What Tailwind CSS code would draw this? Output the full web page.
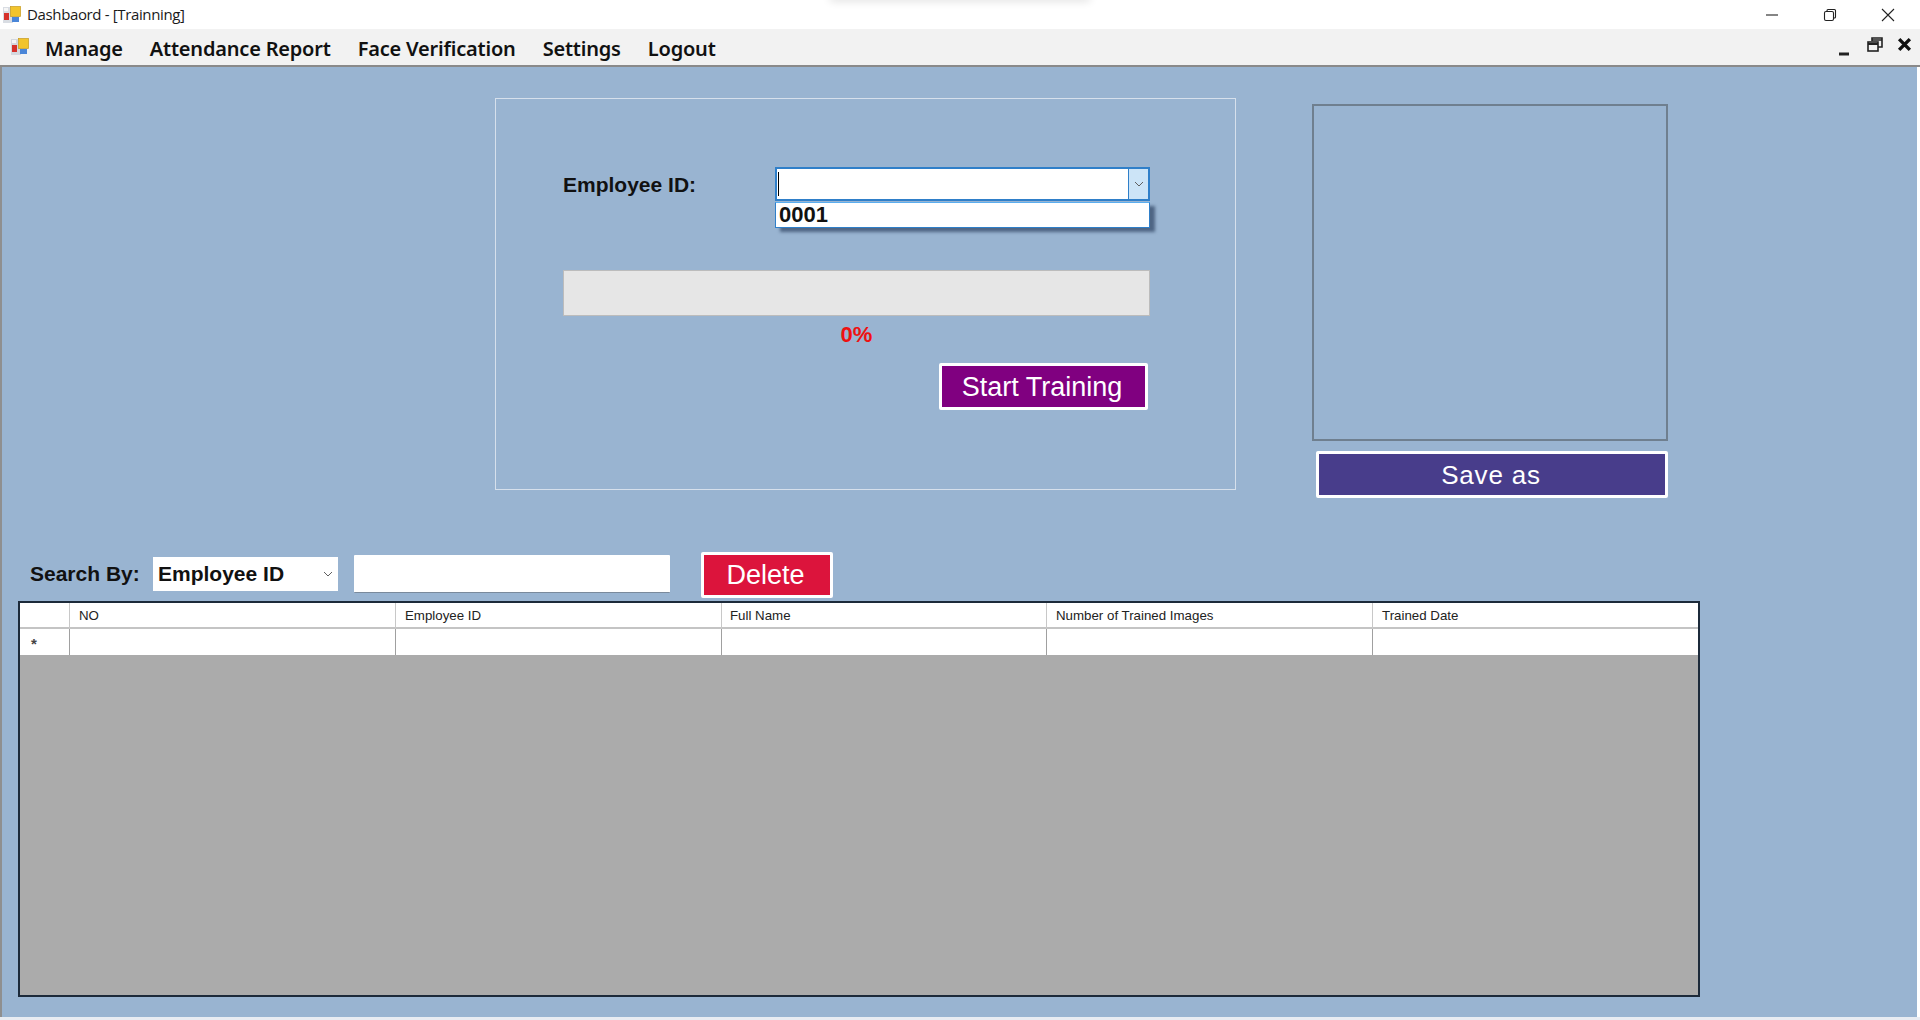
<!DOCTYPE html>
<html>
<head>
<meta charset="utf-8">
<script src="https://cdn.jsdelivr.net/npm/@tailwindcss/browser@4"></script>
<title>Dashbaord - [Trainning]</title>
</head>
<body class="w-[1920px] h-[1020px] overflow-hidden bg-white font-['Liberation_Sans',sans-serif]">
<!-- title bar -->
<div class="h-[29px] bg-white flex items-center relative">
  <div class="absolute left-[830px] -top-[6px] w-[260px] h-[6px] shadow-[0_1px_8px_rgba(0,0,0,0.14)]"></div>
  <svg class="ml-[3px] w-[18px] h-[17px]" viewBox="0 0 18 17"><rect x="0" y="1" width="10" height="16" fill="#d9dde3"/><rect x="1" y="2" width="4" height="3" fill="#f6f6f6"/><rect x="1" y="7" width="5" height="7" fill="#d6322c"/><rect x="7.5" y="0.5" width="10" height="10" fill="#f2c42c" stroke="#c79a1e" stroke-width=".7"/><rect x="9" y="11" width="7" height="5" fill="#4a86d8"/></svg>
  <span class="ml-[6px] text-[15px] text-[#1a1a1a] font-['Open_Sans',sans-serif] tracking-[-0.36px]">Dashbaord - [Trainning]</span>
  <div class="ml-auto flex items-center">
    <svg class="w-[14px] h-[14px] mr-[44px]" viewBox="0 0 14 14"><path d="M1 7h12" stroke="#222" stroke-width="1.1"/></svg>
    <svg class="w-[14px] h-[14px] mr-[44px]" viewBox="0 0 14 14" fill="none" stroke="#222" stroke-width="1.1"><rect x="1.5" y="3.5" width="9" height="9" rx="1.5"/><path d="M4 3.5V2.5a1 1 0 0 1 1-1h6.5a1 1 0 0 1 1 1V9a1 1 0 0 1-1 1h-1"/></svg>
    <svg class="w-[14px] h-[14px] mr-[25px]" viewBox="0 0 14 14"><path d="M1 1l12 12M13 1L1 13" stroke="#222" stroke-width="1.1"/></svg>
  </div>
</div>
<!-- menu bar -->
<div class="h-[36px] bg-[#f2f2f2] flex items-center border-b-[2px] border-[#8a8a8a] box-content">
  <svg class="ml-[11px] w-[18px] h-[17px] -mt-[2px]" viewBox="0 0 18 17"><rect x="0" y="1" width="10" height="16" fill="#d4d8de"/><rect x="1" y="2" width="4" height="3" fill="#f6f6f6"/><rect x="1" y="7" width="5" height="7" fill="#d6322c"/><rect x="7.5" y="0.5" width="10" height="10" fill="#f2c42c" stroke="#c79a1e" stroke-width=".7"/><rect x="9" y="11" width="7" height="5" fill="#4a86d8"/></svg>
  <nav class="ml-[16px] mt-[3px] flex gap-[27px] text-[20px] font-semibold text-[#111] font-['Noto_Sans',sans-serif] tracking-[-0.2px]">
    <span>Manage</span><span>Attendance Report</span><span>Face Verification</span><span>Settings</span><span>Logout</span>
  </nav>
  <div class="ml-auto flex items-center">
    <svg class="w-[12px] h-[14px] mr-[17px] mt-[3px]" viewBox="0 0 12 14"><path d="M1 12h10" stroke="#222" stroke-width="3"/></svg>
    <svg class="w-[16px] h-[15px] mr-[14px] -mt-[5px]" viewBox="0 0 16 15" fill="none" stroke="#222" stroke-width="1.6"><rect x="1" y="5" width="10" height="9"/><path d="M1 7h10" stroke-width="2"/><path d="M5 4V1h10v9h-4M5 3h10" /></svg>
    <svg class="w-[15px] h-[15px] mr-[8px] -mt-[5px]" viewBox="0 0 14 14"><path d="M2 2l10 10M12 2L2 12" stroke="#111" stroke-width="3.2"/></svg>
  </div>
</div>
<!-- MDI client -->
<main class="h-[950px] mr-[3px] bg-[#99b4d1] border-l-2 border-[#8f8f8f]">
  <div class="flex items-start pt-[31px] pl-[493px]">
    <section class="w-[741px] h-[392px] border border-[#d6e0ec] pt-[68px] pl-[67px] pr-[85px] flex flex-col">
      <div class="flex items-start h-[34px]">
        <label class="w-[212px] text-[21px] font-bold text-[#111] leading-[34px] pt-[1px]">Employee ID:</label>
        <div class="relative w-[375px] h-[34px] bg-white border-2 border-[#2f7fc9] flex">
          <span class="ml-[1px] mt-[3px] w-px h-[24px] bg-black"></span>
          <span class="ml-auto w-[20px] h-full bg-[#cce4f7] border-l border-[#2f7fc9] flex items-center justify-center">
            <svg class="w-[10px] h-[6px]" viewBox="0 0 10 6" fill="none" stroke="#606060"><path d="M1 1l4 4 4-4"/></svg>
          </span>
          <div class="absolute -left-[2px] top-[33px] w-[375px] h-[26px] bg-white border border-[#2f7fc9] border-t-[#5aaef0] shadow-[5px_4px_3px_rgba(40,60,90,0.65)] text-[22px] font-bold text-[#111] leading-[24px] pl-[3px]">0001</div>
        </div>
      </div>
      <div class="mt-[69px] w-[587px] h-[46px] bg-[#e6e6e6] border border-[#bcbcbc]"></div>
      <div class="mt-[4px] text-center text-[22px] font-bold text-[#ee1111] leading-[29px]">0%</div>
      <button class="self-end mt-[14px] mr-[2px] w-[209px] h-[47px] bg-[#800080] border-[3px] border-white rounded-[2px] text-white text-[27px] leading-none pt-[2px] pr-[3px]">Start Training</button>
    </section>
    <aside class="ml-[76px] mt-[6px] w-[356px]">
      <div class="h-[337px] border-2 border-[#6f7f8f]"></div>
      <button class="mt-[10px] ml-[4px] w-[352px] h-[47px] bg-[#483d8b] border-[3px] border-white rounded-[2px] text-white text-[26px] leading-none tracking-[0.8px] pr-[2px]">Save as</button>
    </aside>
  </div>
  <div class="mt-[54px] pl-[28px] h-[46px] flex items-center">
    <span class="w-[123px] mb-[2px] text-[21px] font-bold text-[#111]">Search By:</span>
    <div class="w-[185px] h-[34px] mb-[2px] bg-white flex items-center pl-[5px] text-[21px] font-bold text-[#111]">
      Employee ID
      <svg class="ml-auto mr-[5px] w-[10px] h-[6px]" viewBox="0 0 10 6" fill="none" stroke="#606060"><path d="M1 1l4 4 4-4"/></svg>
    </div>
    <div class="ml-[16px] w-[316px] h-[38px] mb-[2px] bg-white border-b border-[#7a8a9c] rounded-[1px]"></div>
    <button class="ml-[31px] w-[132px] h-[46px] bg-[#dc143c] border-[3px] border-white rounded-[2px] text-white text-[27px] leading-none pr-[3px]">Delete</button>
  </div>
  <div class="mt-[3px] ml-[16px] w-[1682px] h-[396px] bg-[#ababab] border-2 border-[#1c2a3a]">
    <div class="grid grid-cols-[49px_326px_326px_325px_326px_1fr] h-[24px] bg-white text-[13.3px] text-[#222] leading-[26px] border-b-2 border-[#c4c4c4] box-content">
      <div></div>
      <div class="border-l border-[#c8c8c8] pl-[9px]">NO</div>
      <div class="border-l border-[#c8c8c8] pl-[9px]">Employee ID</div>
      <div class="border-l border-[#c8c8c8] pl-[8px]">Full Name</div>
      <div class="border-l border-[#c8c8c8] pl-[9px]">Number of Trained Images</div>
      <div class="border-l border-[#c8c8c8] pl-[9px]">Trained Date</div>
    </div>
    <div class="grid grid-cols-[49px_326px_326px_325px_326px_1fr] h-[26px] bg-white text-[14px]">
      <div class="pl-[11px] text-[15px] font-bold text-[#444] leading-[29px] h-[26px] overflow-hidden">*</div>
      <div class="border-l border-[#a0a0a0]"></div>
      <div class="border-l border-[#a0a0a0]"></div>
      <div class="border-l border-[#a0a0a0]"></div>
      <div class="border-l border-[#a0a0a0]"></div>
      <div class="border-l border-[#a0a0a0]"></div>
    </div>
  </div>
</main>
<div class="h-[3px] bg-[#e8ecf2]"></div>
</body>
</html>
